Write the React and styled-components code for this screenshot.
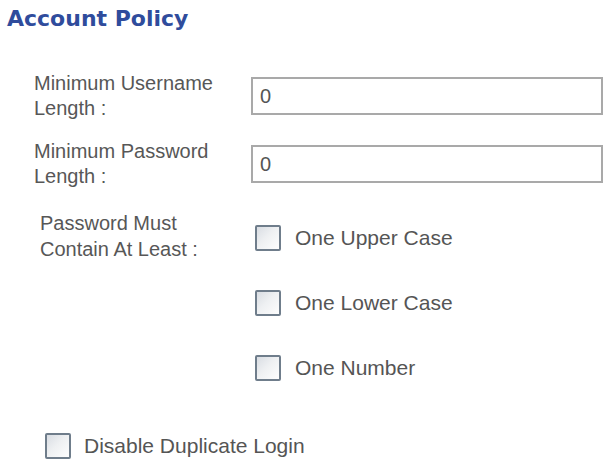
import React from 'react';
import styled, { createGlobalStyle } from 'styled-components';

const GlobalStyle = createGlobalStyle`
  html, body {
    margin: 0;
    padding: 0;
    background: #ffffff;
  }
  body {
    font-family: "Liberation Sans", Arial, sans-serif;
  }
`

const StyledPage = styled.div`
  display: flex;
  flex-direction: column;
  width: 606px;
  height: 462px;
  padding-top: 6px;
  box-sizing: border-box;
  overflow: hidden;
`
const StyledTitle = styled.h2`
  margin: 0 0 0 7px;
  font-family: "DejaVu Sans", Verdana, sans-serif;
  font-weight: bold;
  font-size: 22px;
  line-height: 26px;
  color: #2f4c9c;
`
const StyledFieldRow = styled.div`
  display: grid;
  grid-template-columns: ${props => props.labelWidth}px 1fr;
  align-items: ${props => props.align || 'center'};
  padding-left: ${props => props.indent}px;
  padding-right: 3px;
  margin-top: ${props => props.top}px;
`
const StyledLabel = styled.div`
  font-size: 20px;
  line-height: ${props => props.lineHeight || 25}px;
  color: #575757;
`
const StyledInput = styled.input`
  box-sizing: border-box;
  width: 100%;
  height: 38px;
  margin: 0;
  padding: 0 7px;
  border: 2px solid #a9a9a9;
  border-radius: 0;
  font-family: "Liberation Sans", Arial, sans-serif;
  font-size: 20px;
  color: #555;
  background: #fff;
  outline: none;
`
const StyledOptions = styled.div`
  display: flex;
  flex-direction: column;
  gap: 39px;
  margin-top: 15px;
`
const StyledOption = styled.label`
  display: flex;
  align-items: center;
  gap: ${props => props.gap || 14}px;
  height: 26px;
  font-size: 21px;
  color: #555;
`
const StyledCheckbox = styled.input.attrs({ type: 'checkbox' })`
  appearance: none;
  box-sizing: border-box;
  flex: none;
  width: 26px;
  height: 26px;
  margin: 0;
  border: 2px solid #6f7d8b;
  border-radius: 2px;
  background: linear-gradient(135deg, #d9dde3 0%, #eef0f2 45%, #fdfdfd 100%);
`
const StyledFooter = styled.div`
  padding-left: 45px;
  margin-top: 52px;
`

const options = ['One Upper Case', 'One Lower Case', 'One Number']

export default function App() {
  return (
    <StyledPage>
      <GlobalStyle />
      <StyledTitle>Account Policy</StyledTitle>

      <StyledFieldRow indent={34} labelWidth={217} top={39}>
        <StyledLabel>Minimum Username<br />Length :</StyledLabel>
        <StyledInput defaultValue="0" />
      </StyledFieldRow>

      <StyledFieldRow indent={34} labelWidth={217} top={18}>
        <StyledLabel>Minimum Password<br />Length :</StyledLabel>
        <StyledInput defaultValue="0" />
      </StyledFieldRow>

      <StyledFieldRow indent={40} labelWidth={215} top={21} align="start">
        <StyledLabel lineHeight={26}>Password Must<br />Contain At Least :</StyledLabel>
        <StyledOptions>
          {options.map(option => (
            <StyledOption key={option}>
              <StyledCheckbox />
              {option}
            </StyledOption>
          ))}
        </StyledOptions>
      </StyledFieldRow>

      <StyledFooter>
        <StyledOption gap={13}>
          <StyledCheckbox />
          Disable Duplicate Login
        </StyledOption>
      </StyledFooter>
    </StyledPage>
  )
}
